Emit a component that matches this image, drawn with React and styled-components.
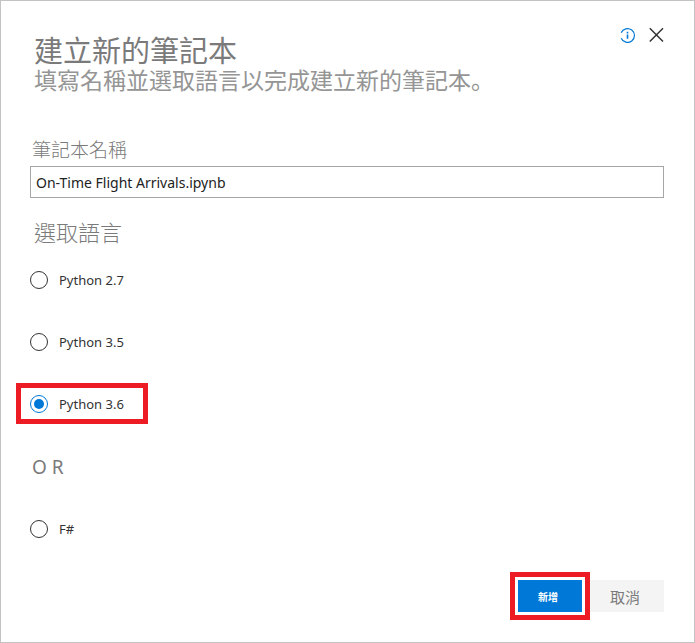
import React, { useState } from 'react';
import styled, { createGlobalStyle } from 'styled-components';

const GlobalStyle = createGlobalStyle`
  * {
    box-sizing: border-box;
  }

  body {
    margin: 0;
    background: #ffffff;
    font-family: 'Noto Sans', 'Noto Sans CJK TC', sans-serif;
  }
`;

const Dialog = styled.form`
  display: flex;
  flex-direction: column;
  min-height: 100vh;
  padding: 25px 30px 30px 29px;
  border: 1px solid #c3c3c3;
`;

const Header = styled.header`
  display: flex;
  justify-content: space-between;
  align-items: flex-start;
`;

const Heading = styled.div`
  padding: 10px 0 0 4px;
`;

const Title = styled.h1`
  margin: 0;
  color: #7a7a7a;
  font-size: 29px;
  font-weight: 400;
  line-height: 30px;
`;

const Subtitle = styled.p`
  margin: 0;
  color: #959595;
  font-family: 'Noto Sans', 'Noto Sans CJK JP', sans-serif;
  font-size: 23px;
  line-height: 28px;
`;

const HeaderActions = styled.div`
  display: flex;
  gap: 12px;
`;

const IconButton = styled.button`
  display: flex;
  padding: 0;
  border: 0;
  background: none;
  color: ${(props) => props.$color};
`;

const FieldLabel = styled.label`
  margin: 44px 0 4px 2px;
  color: #7a7a7a;
  font-size: 19px;
  font-weight: 300;
  line-height: 24px;
`;

const TextInput = styled.input`
  width: 100%;
  height: 32px;
  padding: 0 5px;
  border: 1px solid #a6a6a6;
  color: #222222;
  font-family: inherit;
  font-size: 14px;
`;

const Languages = styled.fieldset`
  display: flex;
  flex-direction: column;
  align-items: flex-start;
  min-width: 0;
  margin: 22px 0 0;
  padding: 0;
  border: 0;
`;

const Legend = styled.legend`
  margin-bottom: 15px;
  padding: 0 0 0 4px;
  color: #7a7a7a;
  font-size: 22px;
  font-weight: 300;
  line-height: 24px;
`;

const Option = styled.label`
  display: flex;
  align-items: center;
  gap: 11px;
  height: 41px;
  margin: 0 0 21px -14px;
  padding: 0 19px 0 9px;
  border: 5px solid ${(props) => (props.$highlighted ? '#ed1c24' : 'transparent')};
  color: #333333;
  font-size: 13px;
  line-height: 18px;
`;

const Radio = styled.input`
  appearance: none;
  display: grid;
  place-content: center;
  width: 18px;
  height: 18px;
  margin: 0;
  border: 1px solid #333333;
  border-radius: 50%;

  &:checked {
    border-color: #0078d7;
  }

  &:checked::before {
    content: '';
    width: 10px;
    height: 10px;
    border-radius: 50%;
    background: #0078d7;
  }
`;

const Separator = styled.p`
  margin: 10px 0 29px 2px;
  color: #7a7a7a;
  font-size: 19px;
  line-height: 24px;
`;

const Footer = styled.footer`
  display: flex;
  justify-content: flex-end;
  align-items: center;
  margin-top: auto;
`;

const Highlight = styled.div`
  margin: -8px 0;
  padding: 3px;
  border: 5px solid #ed1c24;
`;

const Button = styled.button`
  display: block;
  width: ${(props) => (props.$primary ? '64px' : '74px')};
  height: 32px;
  padding: 0 4px 0 0;
  border: 0;
  background: ${(props) => (props.$primary ? '#0078d7' : '#f4f4f4')};
  color: ${(props) => (props.$primary ? '#ffffff' : '#7a7a7a')};
  font-family: inherit;
  font-size: ${(props) => (props.$primary ? '10px' : '15px')};
  font-weight: ${(props) => (props.$primary ? 700 : 400)};
`;

const InfoIcon = () => (
  <svg width="16" height="18" viewBox="0 0 16 18" fill="none" aria-hidden="true">
    <path d="M1.2 6.8A6.9 6.9 0 1 1 1.2 12.2" stroke="currentColor" strokeWidth="1.2" />
    <path d="M7.5 8.4v4.4M7.5 5.8v1.6" stroke="currentColor" strokeWidth="1.6" />
  </svg>
);

const CloseIcon = () => (
  <svg width="16" height="18" viewBox="0 0 16 18" fill="none" aria-hidden="true">
    <path d="M1.8 2.3l13.2 13.2M15 2.3L1.8 15.5" stroke="currentColor" strokeWidth="1.5" />
  </svg>
);

const languages = ['Python 2.7', 'Python 3.5', 'Python 3.6'];

function App() {
  const [name, setName] = useState('On-Time Flight Arrivals.ipynb');
  const [language, setLanguage] = useState('Python 3.6');

  const renderOption = (value) => (
    <Option key={value} $highlighted={value === 'Python 3.6'}>
      <Radio
        type="radio"
        name="language"
        value={value}
        checked={language === value}
        onChange={() => setLanguage(value)}
      />
      {value}
    </Option>
  );

  return (
    <>
      <GlobalStyle />
      <Dialog onSubmit={(event) => event.preventDefault()}>
        <Header>
          <Heading>
            <Title>建立新的筆記本</Title>
            <Subtitle>填寫名稱並選取語言以完成建立新的筆記本。</Subtitle>
          </Heading>
          <HeaderActions>
            <IconButton type="button" aria-label="資訊" $color="#0078d7">
              <InfoIcon />
            </IconButton>
            <IconButton type="button" aria-label="關閉" $color="#333333">
              <CloseIcon />
            </IconButton>
          </HeaderActions>
        </Header>

        <FieldLabel htmlFor="notebook-name">筆記本名稱</FieldLabel>
        <TextInput
          id="notebook-name"
          type="text"
          value={name}
          onChange={(event) => setName(event.target.value)}
        />

        <Languages>
          <Legend>選取語言</Legend>
          {languages.map(renderOption)}
          <Separator>O R</Separator>
          {renderOption('F#')}
        </Languages>

        <Footer>
          <Highlight>
            <Button type="submit" $primary>新增</Button>
          </Highlight>
          <Button type="button">取消</Button>
        </Footer>
      </Dialog>
    </>
  );
}

export default App;
